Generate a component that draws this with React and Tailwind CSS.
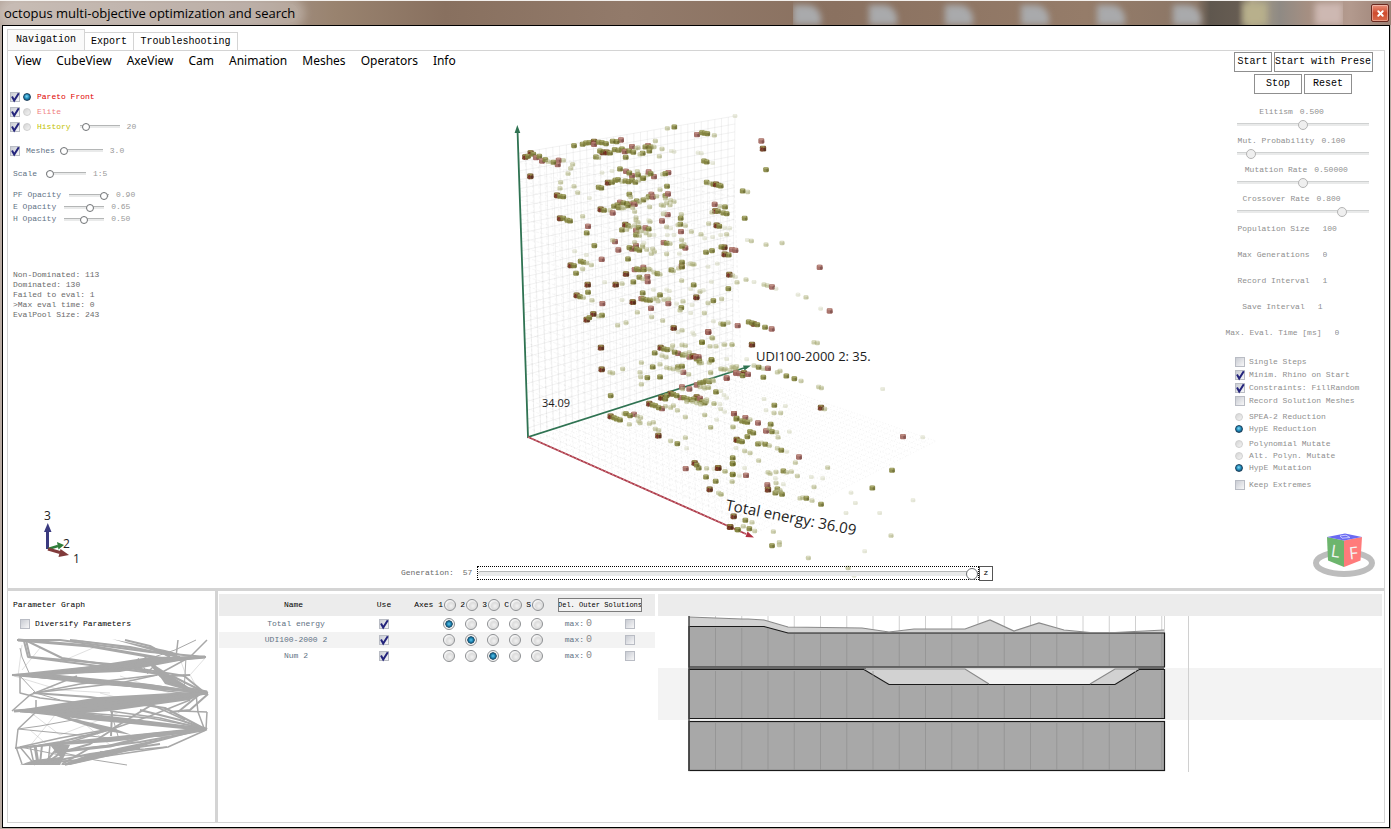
import React from "react";
import { X } from "lucide-react";

const MONO = "font-['Liberation_Mono',monospace]";

/* ---------- small controls ---------- */

function Check({ label, checked, className = "", box = "size-[10px]" }) {
  return (
    <span className={"relative inline-grid shrink-0 " + box + " " + className}>
      <input
        type="checkbox"
        aria-label={label}
        defaultChecked={checked}
        className="peer m-0 size-full appearance-none border border-[#b9bcc4] bg-linear-to-br from-[#c9ccd3] to-[#f7f7f8]"
      />
      <svg
        viewBox="0 0 10 10"
        className="pointer-events-none absolute inset-0 hidden size-full overflow-visible peer-checked:block"
      >
        <path d="M2 4.6 L4.2 8.6 L8.8 1.2" fill="none" stroke="#24247c" strokeWidth="2" />
      </svg>
    </span>
  );
}

function Dot({ label, name, checked }) {
  return (
    <input
      type="radio"
      name={name}
      aria-label={label}
      defaultChecked={checked}
      className="m-0 size-[8px] shrink-0 appearance-none rounded-full border border-[#d0d0d0] bg-linear-to-br from-[#d4d4d4] to-[#f4f4f4] checked:border-[#1b3f5c] checked:bg-[radial-gradient(circle_at_45%_40%,#7fd8f8_0%,#1b86b4_50%,#123a5a_100%)]"
    />
  );
}

function RingDot({ label, name, checked }) {
  return (
    <input
      type="radio"
      name={name}
      aria-label={label}
      defaultChecked={checked}
      className="m-0 size-[12px] shrink-0 appearance-none rounded-full border border-[#8d8f92] bg-[radial-gradient(circle_at_60%_60%,#f2f2f2_0%,#dcdcdc_40%,#f6f6f6_65%,#ffffff_100%)] align-middle checked:bg-[radial-gradient(circle_at_50%_50%,#5cc8ee_0%,#1c7fae_30%,#15445f_48%,#f4f4f4_56%,#ffffff_100%)]"
    />
  );
}

function Slider({ label, value, className = "", strong }) {
  return (
    <input
      type="range"
      aria-label={label}
      min="0"
      max="100"
      defaultValue={value}
      className={
        "m-0 h-[10px] shrink-0 appearance-none bg-transparent [&::-webkit-slider-runnable-track]:h-[3px] [&::-webkit-slider-runnable-track]:border-t [&::-webkit-slider-runnable-track]:border-[#b4b6b6] [&::-webkit-slider-runnable-track]:bg-[#e9eaea] [&::-webkit-slider-thumb]:-mt-[3px] [&::-webkit-slider-thumb]:size-[8px] [&::-webkit-slider-thumb]:appearance-none [&::-webkit-slider-thumb]:rounded-full [&::-webkit-slider-thumb]:border [&::-webkit-slider-thumb]:bg-white " +
        (strong ? "[&::-webkit-slider-thumb]:border-[#6f7275] " : "") +
        className
      }
    />
  );
}

const DIM_SLIDER =
  "w-[132px] [&::-webkit-slider-thumb]:!-mt-[4px] [&::-webkit-slider-thumb]:!size-[10px] [&::-webkit-slider-thumb]:border-[#b4b4b4] [&::-webkit-slider-thumb]:!bg-[#efefef] [&::-webkit-slider-runnable-track]:!border-[#cfd1d1]";

/* ---------- 3D solution space ---------- */

const TYPES = {
  R: ["#a0665e", "#7a4642", "#b98478", 0.9, 18],
  D: ["#75552f", "#56281a", "#928444", 0.95, 19],
  G: ["#858540", "#68682a", "#a3a463", 0.9, 17],
  P: ["#adb07a", "#9a9d66", "#c6c8a0", 0.6, 15],
  V: ["#cfd2b4", "#c6c9ab", "#dfe1cc", 0.5, 14],
};

/* "type x y" in thirds of a pixel, from each cluster's own origin */
const CLUSTERS = [
  {
    ox: 500,
    oy: 100,
    pts: `D 76 174,D 92 162,G 84 172,G 100 166,R 108 176,G 118 172,R 126 186,G 136 182,P 144 188,R 176 184,R 173 197,G 160 190,P 190 184,P 212 208,P 218 196,P 204 224,D 91 232,
G 222 140,G 248 136,G 258 132,G 268 131,D 282 128,R 282 136,G 296 130,G 306 131,G 318 134,R 363 123,G 350 128,G 338 127,D 308 160,D 320 160,G 300 156,G 330 162,G 344 152,G 356 154,G 366 150,G 376 156,R 374 158,R 396 143,G 388 156,G 400 160,P 414 146,G 288 174,P 296 176,G 377 175,P 408 148,R 444 140,G 436 144,G 452 144,P 466 126,G 428 163,P 420 166,G 448 156,P 462 144,P 486 150,P 478 172,P 502 88,G 523 84,V 514 156,V 522 158,
P 182 250,P 180 268,P 222 262,P 233 281,V 268 297,V 306 221,V 336 216,G 360 210,R 378 217,R 396 230,G 388 222,P 412 217,G 414 228,G 428 238,P 442 228,R 446 219,R 462 233,G 452 224,P 488 226,R 505 221,G 496 224,G 501 262,P 480 272,
D 324 251,G 336 250,G 346 244,G 354 242,P 366 248,G 376 246,G 386 248,G 396 244,G 406 250,P 416 244,G 430 238,G 296 265,G 304 267,D 171 289,G 180 292,G 190 293,
R 454 286,G 446 293,R 458 294,G 430 303,P 440 298,P 470 292,G 388 286,P 392 294,G 410 306,G 400 312,R 390 316,G 380 314,R 360 310,G 370 312,G 352 318,G 342 322,G 356 326,P 366 328,G 384 320,R 404 316,P 418 310,P 372 326,P 398 326,G 496 290,R 504 285,P 496 298,P 512 304,P 522 308,P 490 320,P 484 318,P 510 318,P 500 312,P 449 324,D 302 331,G 312 334,P 330 334,R 338 342,P 404 338,R 503 347,P 490 345,P 544 346,G 542 358,V 494 341,
D 180 358,G 190 358,G 202 364,G 210 366,P 248 352,R 264 382,G 260 402,G 283 440,V 224 457,V 259 468,
R 486 366,D 376 377,G 384 380,P 408 364,P 414 370,P 408 356,V 446 364,P 450 368,G 366 393,P 380 392,P 390 384,R 408 394,G 416 386,R 436 387,G 446 390,P 404 380,P 412 400,P 424 396,P 438 402,G 408 408,P 418 410,P 448 408,V 462 408,P 500 384,V 512 388,G 541 376,P 556 380,R 543 398,P 534 378,V 502 408,V 522 408,P 545 423,
R 345 428,P 338 424,R 355 453,R 305 481,G 384 480,R 408 440,G 400 448,R 396 450,G 388 446,G 410 450,G 418 454,P 428 444,P 440 452,P 428 440,P 458 450,P 454 464,P 463 458,P 404 430,R 491 431,G 500 433,P 510 434,R 556 447,G 546 442,P 552 436,V 432 432,P 500 465,V 538 464,
D 212 499,G 222 500,G 242 487,G 250 490,P 260 492,P 274 498,G 228 523,P 248 510,D 263 557,G 264 580,D 230 589,G 240 593,P 250 596,P 276 604,V 314 550,R 307 614,
D 378 525,R 404 512,G 410 510,G 418 512,R 430 505,G 432 512,P 446 510,P 450 512,P 462 520,G 472 524,P 480 526,R 442 533,R 443 548,G 418 535,P 428 540,G 400 549,D 347 557,P 366 554,G 514 513,P 520 516,P 536 508,R 545 501,G 546 490,G 546 504,P 572 494,P 582 496,V 566 496,P 545 545,V 460 572,V 500 572,
G 428 582,R 424 599,G 430 600,G 440 603,G 450 604,P 460 600,P 470 598,G 480 588,P 474 606,G 400 610,D 398 609,P 506 600,R 505 614,P 492 602,V 508 576,G 544 626,P 549 607,P 540 634,V 530 614,P 412 640,R 453 628,P 455 654,P 488 665,P 378 671,P 353 679,D 280 645,G 306 649,P 296 652,D 260 662,G 268 656,D 521 687,P 546 694,V 534 700,V 578 701,V 366 603`,
  },
  {
    ox: 690,
    oy: 100,
    pts: `R 21 107,G 36 101,G 44 103,G 52 104,P 73 109,V 135 51,V 24 161,V 34 163,R 214 126,D 219 149,G 228 212,G 42 186,G 50 189,V 68 192,G 50 250,P 60 253,G 70 256,D 78 256,G 86 259,G 92 261,G 158 276,P 173 279,R 74 316,P 90 322,G 105 324,D 76 336,G 84 337,P 66 340,G 100 342,G 110 344,G 164 358,P 56 374,D 80 379,G 88 382,V 104 386,V 119 388,P 4 398,P 33 406,V 44 418,V 68 414,V 92 408,P 110 406,V 172 423,P 184 426,P 228 437,P 276 432,
G 48 460,G 66 455,D 103 445,G 94 444,R 126 452,R 136 454,D 104 466,G 116 468,P 8 496,V 54 503,V 82 494,D 118 527,P 128 530,V 136 534,P 141 550,P 168 542,V 192 549,P 222 557,P 232 560,R 246 564,V 258 569,R 389 505,V 324 587,P 348 595,V 392 629,R 419 636,G 11 558,V 2 570,P 30 578,V 40 574,V 64 548,G 115 569,D 19 595,G 70 605,P 54 612,P 95 600,V 6 618,P 43 642,V 2 642,V 70 667,P 92 674,G 100 676,P 114 671,R 143 680,G 176 669,D 192 675,G 186 672,G 202 677,G 225 685,R 245 690,R 55 699,V 12 707,P 66 716`,
  },
  {
    ox: 500,
    oy: 330,
    pts: `D 303 56,D 305 121,P 330 130,P 338 132,P 368 120,G 332 200,D 482 56,G 464 72,G 492 60,G 502 62,P 486 80,P 498 84,P 518 50,P 514 60,P 546 48,P 556 50,R 534 73,G 524 70,G 548 78,R 568 84,G 576 82,R 584 82,R 596 84,G 590 90,P 556 74,P 556 80,P 568 70,P 598 102,P 628 101,G 634 92,G 606 40,P 648 52,V 670 47,P 696 47,P 638 28,R 624 9,P 424 101,G 458 114,P 480 106,P 500 116,P 510 118,P 520 120,G 534 114,G 546 112,P 534 122,R 550 130,P 566 136,V 540 128,P 420 130,G 442 146,P 424 166,G 480 144,P 422 144,P 632 132,P 662 120,P 672 122,P 690 124,P 700 114,P 708 120,R 680 148,R 708 132,
R 546 174,P 548 180,R 568 180,R 590 168,G 600 162,G 610 160,G 618 156,G 628 158,P 638 152,P 640 156,P 626 176,P 612 174,P 648 188,P 600 174,V 672 198,V 680 206,
D 512 194,G 520 196,G 486 206,D 484 206,G 496 210,G 500 200,R 542 206,G 552 206,G 530 200,G 562 210,G 572 212,D 590 204,G 582 210,G 598 214,R 600 208,G 606 218,G 614 222,P 560 218,P 578 218,P 590 222,P 602 226,P 620 212,P 642 224,V 662 240,V 660 226,
D 448 224,G 458 228,G 466 230,R 486 239,G 476 236,P 496 232,P 512 236,P 520 230,P 532 244,P 556 264,V 615 258,P 632 295,D 332 262,G 342 266,G 350 270,G 360 273,P 372 254,G 378 254,R 402 256,G 390 260,P 412 262,P 422 266,P 416 276,P 388 286,P 420 282,P 448 284,P 460 280,P 466 300,P 476 304,D 475 320,P 512 336,G 532 344,P 556 326,V 560 358,R 557 419,D 584 402,G 596 417,G 590 408,P 620 418,V 642 420,D 655 417,P 676 427,G 618 444,G 647 457,D 629 481,P 656 492,P 664 496,D 691 594,G 712 602,R 702 254,G 709 270,P 698 294,G 711 334,P 698 386,G 698 404,G 698 437,V 698 458`,
  },
  {
    ox: 690,
    oy: 330,
    pts: `R 55 9,P 66 27,G 36 40,P 104 47,P 126 47,P 60 52,D 10 82,R 18 84,G 28 96,G 65 93,P 34 102,V 110 90,V 170 91,D 186 47,P 372 40,P 382 42,P 62 130,P 95 120,P 106 120,P 126 114,P 136 120,P 140 112,R 110 147,R 138 132,R 148 134,D 162 132,G 158 140,R 174 136,P 192 110,G 206 115,P 220 119,R 234 118,P 262 130,P 270 126,G 220 145,G 289 141,G 313 149,P 333 156,P 386 174,P 394 177,V 578 180,P 44 178,P 54 176,P 56 156,G 78 189,V 92 186,P 44 215,P 50 218,P 72 224,V 92 240,V 104 248,P 44 258,V 80 272,P 62 295,V 222 210,G 253 229,V 286 231,V 228 244,P 252 252,P 272 252,D 393 236,P 404 240,
R 132 254,G 140 268,R 166 266,G 156 276,G 164 278,G 172 280,P 180 272,P 130 294,R 204 282,R 228 306,G 242 286,P 238 298,G 246 308,P 260 310,G 180 308,G 190 312,G 172 323,V 298 308,P 264 325,D 140 332,G 148 336,G 156 338,G 204 345,P 214 342,G 226 346,P 238 350,P 262 358,G 274 364,V 290 368,V 138 357,P 164 366,P 180 372,G 128 387,G 128 404,P 206 395,R 327 384,P 316 401,P 413 416,P 322 441,V 364 444,V 398 448,D 84 417,P 104 427,G 128 436,P 126 458,V 164 417,R 168 439,V 148 440,P 234 430,P 240 434,P 258 429,G 280 426,P 290 430,P 304 428,V 256 448,P 258 462,V 280 466,R 232 468,D 234 482,G 262 480,G 256 492,P 272 490,P 270 484,G 276 496,P 262 488,P 330 508,P 338 506,G 349 508,P 366 515,G 393 526,P 372 474,V 483 491,V 496 522,G 547 477,G 606 424,R 639 323,V 698 325,V 669 514,P 603 620,V 569 552,V 468 552,D 131 562,G 166 574,P 186 580,D 120 594,G 144 602,P 160 592,G 178 599,P 194 606,P 250 608,G 246 650,P 268 648,P 268 640,P 355 687,V 524 667,P 474 717,V 492 740,V 86 492,P 92 496`,
  },
];

function Voxel({ t, x, y }) {
  const [face, dark, top, o, s] = TYPES[t];
  const w = s / 3;
  const h = (s - 2) / 3;
  return (
    <g opacity={o} transform={`translate(${x - w / 2} ${y - h / 2})`}>
      <rect width={w} height={h} rx="1.3" fill={face} />
      <rect x={w * 0.55} y={h * 0.35} width={w * 0.42} height={h * 0.55} rx="0.8" fill={dark} />
      <rect x={w * 0.15} y="0.2" width={w * 0.6} height={h * 0.3} rx="0.6" fill={top} />
      {t === "D" && <path d={`M0.4 ${h * 0.8}L${w * 0.35} ${h * 0.3}V${h}`} stroke="#7a1f1c" strokeWidth="0.9" fill="none" />}
    </g>
  );
}

function mesh([a, b, c, d], n, m) {
  const at = (p, q, t) => [p[0] + (q[0] - p[0]) * t, p[1] + (q[1] - p[1]) * t];
  const f = (p) => p[0].toFixed(1) + " " + p[1].toFixed(1);
  let out = "";
  for (let i = 0; i <= n; i++) out += `M${f(at(a, b, i / n))}L${f(at(d, c, i / n))}`;
  for (let j = 0; j <= m; j++) out += `M${f(at(a, d, j / m))}L${f(at(b, c, j / m))}`;
  return out;
}

function SolutionSpace() {
  return (
    <svg viewBox="198 72 1016 490" className="block w-full overflow-visible" role="img" aria-label="Solution space">
      <g fill="none" stroke="#777" strokeWidth="0.5">
        <path d={mesh([[519, 154], [735, 117], [732, 372], [528, 438]], 32, 32)} opacity="0.2" />
        <path d={mesh([[519, 154], [734, 186], [748, 535], [528, 438]], 34, 30)} opacity="0.13" strokeDasharray="3 2" />
        <path d={mesh([[528, 438], [732, 372], [936, 442], [750, 537]], 32, 32)} opacity="0.16" strokeDasharray="1 2" />
      </g>
      <path d="M517.5 131L528 438L744 369" fill="none" stroke="#2f7352" strokeWidth="1.8" />
      <path d="M517.3 126L514.6 134H520.3ZM751 366.500L743 366.500L744.500 371.500Z" fill="#2f7352" />
      <path d="M528 438L746 535" stroke="#a83444" strokeWidth="1.800" />
      <path d="M528 438L746 535" stroke="#f0b0b0" strokeWidth="0.6" strokeDasharray="2 2" />
      <path d="M754 538.500L747.500 532.500L745.500 538Z" fill="#b03040" />
      {CLUSTERS.map((c) =>
        c.pts.split(",").map((s, i) => {
          const [t, x, y] = s.trim().split(" ");
          return <Voxel key={c.ox + "-" + c.oy + "-" + i} t={t} x={c.ox + x / 3} y={c.oy + y / 3} />;
        })
      )}
      <g fill="#1c1c1c" fontFamily="'Open Sans','Noto Sans',sans-serif">
        <text x="756" y="362" fontSize="13">UDI100-2000 2: 35.</text>
        <text x="542" y="408" fontSize="11">34.09</text>
        <text x="725" y="511" fontSize="15" transform="rotate(11 725 511)">Total energy: 36.09</text>
      </g>
    </svg>
  );
}

function AxisGizmo() {
  return (
    <svg viewBox="38 508 48 58" className="h-[58px] w-[48px] overflow-visible" role="img" aria-label="Axes">
      <path d="M47.500 549V530" stroke="#3a3a80" strokeWidth="3" />
      <path d="M47.800 523L44 532H51.500Z" fill="#3a3a80" />
      <path d="M48 549L58 546" stroke="#2f7d3a" strokeWidth="2.500" />
      <path d="M64 545L57 542L58.500 549.500Z" fill="#2f7d3a" />
      <path d="M48 549L60 552.500" stroke="#803a3a" strokeWidth="3" />
      <path d="M69 555L60.500 549L58.500 557Z" fill="#803a3a" />
      <g fill="#222" fontFamily="'Open Sans',sans-serif" fontSize="12">
        <text x="44" y="520">3</text>
        <text x="63" y="548">2</text>
        <text x="73" y="563">1</text>
      </g>
    </svg>
  );
}

function ViewCube() {
  return (
    <svg viewBox="1312 530 64 48" className="h-[48px] w-[64px]" role="img" aria-label="View cube">
      <ellipse cx="1344" cy="563" rx="28" ry="11" fill="none" stroke="#bdbdbd" strokeWidth="6" />
      <path d="M1327 537L1344 540.500V567L1328 560.500Z" fill="#6db56d" />
      <path d="M1344 540.500L1362 537L1360.500 560.500L1344 567Z" fill="#ff7b7b" />
      <path d="M1327 537L1345 533.500L1362 537L1344 540.500Z" fill="#6a6af2" />
      <path d="M1340 536L1346 535.200L1350 537.500L1342 538.200Z" fill="none" stroke="#c8c8ff" strokeWidth="1" />
      <g fontFamily="'Open Sans',sans-serif" fontSize="17" fill="#f4f4f4">
        <text x="1331" y="557" transform="rotate(8 1335 552)">L</text>
        <text x="1349" y="559" transform="rotate(-6 1353 553)">F</text>
      </g>
    </svg>
  );
}

/* ---------- left settings ---------- */

function LeftPanel() {
  return (
    <section className={"flex w-[190px] shrink-0 flex-col text-[8px] text-[#5f7285] " + MONO}>
      <div className="mt-[18px] pl-[2px]">
        {[
          ["Pareto Front", "text-[#e00000]", true],
          ["Elite", "text-[#f08080]", false],
          ["History", "text-[#c2c200]", false],
        ].map(([n, c, on]) => (
          <div key={n} className="flex h-[15px] items-center">
            <Check label={"Show " + n} checked />
            <label className={"ml-[3px] flex items-center gap-[6px] " + c}>
              <Dot label={n} name="front" checked={on} />
              {n}
            </label>
            {n === "History" && (
              <>
                <Slider label="History length" value="8" strong className="ml-[9px] w-[40px]" />
                <output className="ml-[7px] text-[#999]">20</output>
              </>
            )}
          </div>
        ))}
      </div>
      <div className="mt-[9px] flex h-[15px] items-center pl-[2px]">
        <Check label="Show meshes" checked />
        <span className="ml-[6px]">Meshes</span>
        <Slider label="Mesh size" value="0" strong className="ml-[5px] w-[43px]" />
        <output className="ml-[7px] text-[#999]">3.0</output>
      </div>
      <div className="mt-[8px] flex h-[15px] items-center pl-[5px]">
        <span>Scale</span>
        <Slider label="Scale" value="0" strong className="ml-[9px] w-[40px]" />
        <output className="ml-[7px] text-[#999]">1:5</output>
      </div>
      <div className="mt-[8px] pl-[5px]">
        {[
          ["PF Opacity", 98, "0.90"],
          ["E Opacity", 68, "0.65"],
          ["H Opacity", 50, "0.50"],
        ].map(([n, v, t]) => (
          <div key={n} className="flex h-[12px] items-center">
            <span>{n}</span>
            <Slider label={n} value={v} strong className="ml-[8px] w-[40px]" />
            <output className="ml-[7px] text-[#999]">{t}</output>
          </div>
        ))}
      </div>
      <div className="mt-[45px] pl-[5px] leading-[10px] text-[#6b6b6b]">
        <p>Non-Dominated: 113</p>
        <p>Dominated: 130</p>
        <p>Failed to eval: 1</p>
        <p>&gt;Max eval time: 0</p>
        <p>EvalPool Size: 243</p>
      </div>
      <div className="mt-auto pb-[22px] pl-[30px]">
        <AxisGizmo />
      </div>
    </section>
  );
}

/* ---------- right settings ---------- */

function RightPanel() {
  const btn =
    "h-[20px] overflow-hidden border border-[#8f8f8f] bg-white text-[10px] leading-[18px] whitespace-nowrap text-black";
  return (
    <aside className={"flex w-[170px] shrink-0 flex-col pt-px pl-[8px] text-[8px] text-[#8f8f8f] " + MONO}>
      <div className="flex justify-center gap-[2px]">
        <button className={btn + " w-[38px]"}>Start</button>
        <button className={btn + " w-[99px]"}>Start with Prese</button>
      </div>
      <div className="mt-[2px] flex justify-center gap-[2px]">
        <button className={btn + " w-[48px]"}>Stop</button>
        <button className={btn + " w-[48px]"}>Reset</button>
      </div>
      <div className="mt-[10px]">
        {[
          ["Elitism", "0.500", 50],
          ["Mut. Probability", "0.100", 7],
          ["Mutation Rate", "0.50000", 50],
          ["Crossover Rate", "0.800", 82],
        ].map(([n, t, v]) => (
          <div key={n} className="flex h-[29px] flex-col items-center">
            <div className="flex h-[15px] items-center gap-[7px] pr-[12px]">
              <span className="whitespace-nowrap">{n}</span>
              <output className="w-[35px]">{t}</output>
            </div>
            <Slider label={n} value={v} className={DIM_SLIDER} />
          </div>
        ))}
      </div>
      <div className="flex flex-col gap-[8px]">
        {[
          ["Population Size", "100"],
          ["Max Generations", "0"],
          ["Record Interval", "1"],
          ["Save Interval", "1"],
          ["Max. Eval. Time [ms]", "0"],
        ].map(([n, v]) => (
          <label key={n} className="flex h-[18px] items-center justify-center gap-[13px] pr-[10px] whitespace-nowrap">
            {n}
            <input type="text" defaultValue={v} className="w-[36px] bg-transparent p-0 outline-none" />
          </label>
        ))}
      </div>
      <div className="mt-[13px] pl-[13px]">
        {[
          ["Single Steps", false],
          ["Minim. Rhino on Start", true],
          ["Constraints: FillRandom", true],
          ["Record Solution Meshes", false],
        ].map(([n, c]) => (
          <label key={n} className="flex h-[13px] items-center gap-[4px] whitespace-nowrap">
            <Check label={n} checked={c} />
            {n}
          </label>
        ))}
      </div>
      <div className="mt-[4px] pl-[13px]">
        {[
          ["SPEA-2 Reduction", false],
          ["HypE Reduction", true],
        ].map(([n, c]) => (
          <label key={n} className="flex h-[12px] items-center gap-[6px]">
            <Dot label={n} name="reduction" checked={c} />
            {n}
          </label>
        ))}
      </div>
      <div className="mt-[3px] pl-[13px]">
        {[
          ["Polynomial Mutate", false],
          ["Alt. Polyn. Mutate", false],
          ["HypE Mutation", true],
        ].map(([n, c]) => (
          <label key={n} className="flex h-[12px] items-center gap-[6px]">
            <Dot label={n} name="mutation" checked={c} />
            {n}
          </label>
        ))}
      </div>
      <label className="mt-[4px] flex h-[13px] items-center gap-[4px] pl-[13px]">
        <Check label="Keep Extremes" />
        Keep Extremes
      </label>
      <div className="mt-auto flex justify-end pr-[8px] pb-[10px]">
        <ViewCube />
      </div>
    </aside>
  );
}

/* ---------- bottom panels ---------- */

const WEDGES = [
  "M70 639L115 645L182 657L206 657L150 652Z",
  "M112 639L165 650L195 658L175 657Z",
  "M12 676L85 667L150 657L206 656L120 672Z",
  "M12 675L60 675L150 684L208 693L90 684Z",
  "M12 711L100 697L208 691L190 700L110 711L60 715Z",
  "M12 711L85 713L208 728L204 731L90 720Z",
  "M40 711L110 727L132 735L100 730Z",
  "M15 748L60 742L206 727L190 733L110 742Z",
  "M60 765L90 754L206 729L150 744L110 756L70 765Z",
  "M20 765L34 760L60 757L50 745L70 745L60 765Z",
  "M150 662L190 688L208 693L186 690L165 684Z",
];

const STRANDS = [
  ["M17 640L60 640L150 652L206 657", 2],
  ["M18 640L90 646L170 660L205 657", 3],
  ["M25 640L62 658L130 668L170 676L190 675", 2],
  ["M24 641L28 657L160 674", 2],
  ["M26 640L30 657L110 664L185 676", 2],
  ["M70 640L130 647L180 657", 2],
  ["M125 640L150 646L170 657", 2],
  ["M178 640L176 657", 1.5],
  ["M207 640L190 657L157 675L120 683L33 693", 1.5],
  ["M196 640L175 650L145 660", 1],
  ["M205 657L185 659L110 668L60 673L12 675", 2],
  ["M203 657L120 664L15 675", 2],
  ["M190 657L140 661L85 672L40 675", 2],
  ["M12 675L60 679L140 684L208 693", 2],
  ["M20 675L110 684L205 693", 2],
  ["M15 675L90 681L190 694", 1.5],
  ["M145 657L160 676L190 690L208 693", 2],
  ["M160 660L148 672", 1.5],
  ["M138 658L148 674", 1],
  ["M155 672L185 688L207 692", 3],
  ["M183 675L205 693", 2],
  ["M172 676L200 690", 2],
  ["M186 657L185 675L184 690", 1],
  ["M20 675L20 693L40 698L90 704", 1.5],
  ["M20 676L36 693L60 700", 1],
  ["M30 675L22 657L20 648", 1],
  ["M157 675L80 684L35 693", 1.5],
  ["M77 676L30 695L12 711", 1.5],
  ["M33 693L90 697L165 708L205 729", 2],
  ["M208 693L150 699L90 706L14 711", 3],
  ["M206 693L130 704L60 712L20 711", 3],
  ["M208 694L190 710L170 712", 2],
  ["M200 694L178 712", 2],
  ["M196 694L198 712L204 728", 1.5],
  ["M207 712L206 729", 1.5],
  ["M180 711L207 712", 1.5],
  ["M20 711L60 714L205 729", 2],
  ["M60 711L150 718L205 728", 1.5],
  ["M110 711L160 718L200 728", 1.5],
  ["M140 710L180 720L203 728", 2],
  ["M150 704L185 720", 1.5],
  ["M112 712L111 736", 2],
  ["M111 712L118 736", 1],
  ["M160 700L130 718L112 729L60 742L30 747", 2],
  ["M190 700L150 716L115 728L70 742", 1.5],
  ["M36 700L36 712L18 729", 1.5],
  ["M18 729L110 738L170 736", 1],
  ["M18 729L16 747L22 764", 1.5],
  ["M18 729L40 726L100 715", 1],
  ["M206 729L160 733L90 741L60 744L15 748", 2],
  ["M207 729L150 736L110 746L55 752", 3],
  ["M205 730L140 742L90 748L62 764", 2],
  ["M206 730L168 747L100 757L65 765", 1.5],
  ["M167 747L145 749L100 752", 1.5],
  ["M110 729L60 738L20 747L35 765", 1.5],
  ["M112 730L90 744L62 752L45 764", 2],
  ["M160 744L90 754L40 764", 2],
  ["M140 748L80 760L25 764", 2],
  ["M35 745L38 764", 3],
  ["M42 745L40 764", 2],
  ["M50 745L48 764", 1.5],
  ["M60 745L44 764", 2],
  ["M30 746L34 764L60 764", 1.5],
  ["M60 752L95 760L127 765", 1],
  ["M20 747L60 755L100 756", 1],
];

function ParameterGraph() {
  return (
    <section className={"w-[207px] shrink-0 text-black " + MONO}>
      <h2 className="pt-[8px] pl-[5px] text-[8px] leading-[12px]">Parameter Graph</h2>
      <label className="mt-[6px] flex h-[13px] items-center gap-[5px] pl-[12px] text-[8px]">
        <Check label="Diversify Parameters" />
        Diversify Parameters
      </label>
      <svg viewBox="8 635 207 135" className="mt-[5px] block w-full" role="img" aria-label="Parameter graph">
        <path d={WEDGES.join("")} fill="#a8a8a8" />
        <g fill="none" stroke="#a8a8a8" strokeLinejoin="bevel">
          <path
            d="M22 645L18 676M40 648L22 670M100 645L60 662M14 676L60 690L110 693M120 676L190 700M100 693L170 711M30 712L60 735M55 715L30 746M80 720L110 745M120 712L60 735M30 730L50 747M180 659L186 675M206 657L190 675L200 693"
            strokeWidth="0.6"
            opacity="0.6"
          />
          {STRANDS.map(([d, w]) => (
            <path key={d} d={d} strokeWidth={w} />
          ))}
        </g>
      </svg>
    </section>
  );
}

const AXES = ["1", "2", "3", "C", "S"];

function ObjectiveTable() {
  return (
    <section className={"w-[440px] shrink-0 pt-[3px] pl-px " + MONO}>
      <table className="w-[436px] table-fixed border-collapse text-[8px]">
        <colgroup>
          <col className="w-[149px]" />
          <col className="w-[32px]" />
          <col className="w-[60px]" />
          <col className="w-[22px]" />
          <col className="w-[22px]" />
          <col className="w-[22px]" />
          <col className="w-[22px]" />
          <col className="w-[58px]" />
          <col className="w-[49px]" />
        </colgroup>
        <thead>
          <tr className="h-[22px] bg-[#ececec] text-black">
            <th className="p-0 font-normal">Name</th>
            <th className="p-0 font-normal">Use</th>
            {AXES.map((a) => (
              <th key={a} className="p-0 pr-[4px] font-normal">
                <label className="flex items-center justify-end gap-px whitespace-nowrap">
                  {a === "1" ? "Axes 1" : a}
                  <RingDot label={"All on axis " + a} name={"all-" + a} />
                </label>
              </th>
            ))}
            <th colSpan="2" className="p-0 pl-[10px] text-left font-normal">
              <button className="block h-[14px] w-[84px] overflow-hidden border border-[#7d7d7d] bg-[#f2f2f2] text-[7px] leading-[12px] whitespace-nowrap">
                <span className="flex justify-center">Del. Outer Solutions</span>
              </button>
            </th>
          </tr>
        </thead>
        <tbody className="text-[#5f7285]">
          {["Total energy", "UDI100-2000 2", "Num 2"].map((n, r) => (
            <tr key={n} className="h-[16px] even:bg-[#f3f3f3]">
              <td className="p-0 pl-[5px] text-center">{n}</td>
              <td className="p-0 text-center">
                <span className="flex justify-center">
                  <Check label={"Use " + n} checked />
                </span>
              </td>
              {AXES.map((a, i) => (
                <td key={a} className="p-0 pr-[5px]">
                  <span className="flex justify-end">
                    <RingDot label={n + " on axis " + a} name={"row-" + r} checked={i === r} />
                  </span>
                </td>
              ))}
              <td className="p-0">
                <label className="flex items-center justify-end gap-[2px] whitespace-nowrap">
                  max:
                  <input type="text" defaultValue="0" className="w-[20px] bg-transparent p-0 text-[10px] leading-[12px] text-[#8a8a8a] outline-none" />
                </label>
              </td>
              <td className="p-0">
                <span className="flex pl-[19px]">
                  <Check label={"Limit " + n} />
                </span>
              </td>
            </tr>
          ))}
        </tbody>
      </table>
    </section>
  );
}

function ConvergenceChart() {
  const cols = Array.from({ length: 18 }, (_, i) => 715.5 + i * 26.25).filter((x) => x < 1164);
  return (
    <section className="min-w-0 flex-1 pt-[3px] pr-[2px]">
      <div className="h-[22px] bg-[#ececec]" />
      <svg viewBox="658 616 724 156" className="block w-full" role="img" aria-label="Convergence">
        <rect x="658" y="668" width="724" height="52" fill="#f3f3f3" />
        <path d="M689 617L742 619H748L764 620L788 627L862 628L889 632L914 629H965L990 620L1014 631L1039 623L1064 630L1090 632.500H1115L1164 630V634H689Z" fill="#d2d2d2" />
        <path d="M864 669H965L989 684H889ZM1090 684L1115 669H1139L1115 684Z" fill="#d2d2d2" />
        <g stroke="#d0d0d0">
          {cols.map((x) => (
            <path key={x} d={`M${x} 616V669`} />
          ))}
          <path d="M1164.500 616V633M1188.500 616V772" />
        </g>
        <g fill="#a8a8a8" stroke="#1a1a1a" strokeWidth="1.200">
          <path d="M689 626.500H764L788 633H1164.500V667H689Z" />
          <path d="M689 669.500H864L889 684.500H1115L1139 669.500H1164.500V718.500H689Z" />
          <rect x="689" y="721.500" width="475.500" height="49" />
        </g>
        <path d="M689 667H1164V669H689Z" fill="#666" />
        <rect x="866" y="668" width="272" height="1.500" fill="#d8d8d8" />
        <g stroke="#8f8f8f" opacity="0.7">
          {cols.map((x) => (
            <path key={x} d={`M${x} ${x > 780 ? 634 : 628}V666M${x} ${x > 880 && x < 1120 ? 686 : 671}V718M${x} 723V770`} />
          ))}
        </g>
        <g fill="none" stroke="#8a8a8a" strokeWidth="1.200">
          <path d="M689 617L742 619H748L764 620L788 627L862 628L889 632L914 629H965L990 620L1014 631L1039 623L1064 630L1090 632.500H1115L1164 630" />
          <path d="M864 669H965L989 684M1090 684L1115 669H1139" />
        </g>
        <path d="M689 616V771" stroke="#444" strokeWidth="1.500" />
      </svg>
    </section>
  );
}

/* ---------- window ---------- */

function TitleBar() {
  return (
    <header className="flex h-[25px] items-center justify-between border-t border-[#f2efec] bg-[linear-gradient(90deg,#b5a69c_0%,#a5948a_18%,#99836f_24%,#88705f_32%,#927a6a_45%,#8a7160_60%,#957c69_78%,#8b7666_86%,#5f574e_87%,#665c52_89%,#aaa086_90%,#8f8a84_92%,#a58f82_94%,#b39a8e_97%,#9c8276_100%)] pl-[4px]">
      <h1 className="rounded-full bg-white/25 pr-[4px] font-['Open_Sans',sans-serif] text-[13px] leading-[20px] text-black shadow-[0_0_8px_6px_rgba(255,255,255,0.25)]">
        octopus multi-objective optimization and search
      </h1>
      <div className="flex h-full items-center">
        <div aria-hidden="true" className="mr-[28px] flex h-full items-end gap-[48px] overflow-hidden">
          {[0, 1, 2, 3, 4, 5].map((i) => (
            <i key={i} className="h-[20px] w-[28px] rounded-tr-[14px] bg-[#a9aaac] blur-[3px]" />
          ))}
          <i className="-ml-[6px] h-[22px] w-[24px] bg-[#b8b08c] blur-[3px]" />
          <i className="h-[22px] w-[28px] bg-[#cdb8b2] blur-[3px]" />
        </div>
        <button
          aria-label="Close"
          className="mr-[2px] grid h-[18px] w-[18px] place-items-center rounded-[2px] border border-[#6b2a20] bg-linear-to-b from-[#e8907a] via-[#cf4a2c] to-[#d8694a] text-white shadow-[inset_0_0_0_1px_rgba(255,255,255,0.35)]"
        >
          <X size={9} strokeWidth={5} />
        </button>
      </div>
    </header>
  );
}

export default function App() {
  const tab = "h-[18px] border border-b-0 border-[#d4d4d4] text-[10px] leading-[18px] text-black ";
  return (
    <div className="flex min-h-screen flex-col bg-[#b9aca4]">
      <TitleBar />
      <div className="mr-px mb-px ml-[2px] flex flex-1 flex-col border border-black bg-white px-[4px] pt-[3px] pb-[4px]">
        <nav className={"flex items-end " + MONO} role="tablist">
          <button role="tab" aria-selected="true" className={tab + "!h-[21px] w-[78px] bg-[#fafafa] !leading-[20px]"}>
            Navigation
          </button>
          <button role="tab" aria-selected="false" className={tab + "w-[49px] border-l-0"}>
            Export
          </button>
          <button role="tab" aria-selected="false" className={tab + "w-[104px] border-l-0"}>
            Troubleshooting
          </button>
        </nav>
        <div className="flex flex-1 flex-col border border-[#d4d4d4]">
          <div className="flex flex-1">
            <div className="flex min-w-0 flex-1 flex-col">
              <menu className="flex h-[20px] items-center gap-[15px] pl-[7px] font-['Noto_Sans',sans-serif] text-[12px] leading-[20px] text-black">
                {["View", "CubeView", "AxeView", "Cam", "Animation", "Meshes", "Operators", "Info"].map((m) => (
                  <li key={m}>
                    <button>{m}</button>
                  </li>
                ))}
              </menu>
              <div className="flex flex-1">
                <LeftPanel />
                <main className="flex min-w-0 flex-1 flex-col">
                  <SolutionSpace />
                  <div className={"mt-[4px] mr-[221px] ml-[203px] flex h-[16px] items-center text-[8px] text-[#6b6b6b] " + MONO}>
                    <label htmlFor="generation">Generation:</label>
                    <output className="ml-[9px] w-[14px]">57</output>
                    <div className="flex h-[14px] min-w-0 flex-1 items-center border border-dotted border-black">
                      <input
                        id="generation"
                        type="range"
                        min="0"
                        max="57"
                        defaultValue="57"
                        className="m-0 h-[12px] w-full appearance-none bg-transparent [&::-webkit-slider-runnable-track]:h-[5px] [&::-webkit-slider-runnable-track]:rounded-full [&::-webkit-slider-runnable-track]:border-t [&::-webkit-slider-runnable-track]:border-[#b4b6b6] [&::-webkit-slider-runnable-track]:bg-[#e9eaea] [&::-webkit-slider-thumb]:-mt-[4px] [&::-webkit-slider-thumb]:size-[12px] [&::-webkit-slider-thumb]:appearance-none [&::-webkit-slider-thumb]:rounded-full [&::-webkit-slider-thumb]:border [&::-webkit-slider-thumb]:border-[#6f7275] [&::-webkit-slider-thumb]:bg-white"
                      />
                    </div>
                    <button className="h-[15px] w-[14px] border border-[#555] bg-white text-[8px] leading-[12px] text-black">z</button>
                  </div>
                </main>
              </div>
            </div>
            <RightPanel />
          </div>
          <div className="flex h-[234px] border-t-[3px] border-[#d4d4d4]">
            <ParameterGraph />
            <div className="w-[3px] shrink-0 bg-[#d4d4d4]" />
            <ObjectiveTable />
            <ConvergenceChart />
          </div>
        </div>
      </div>
    </div>
  );
}
